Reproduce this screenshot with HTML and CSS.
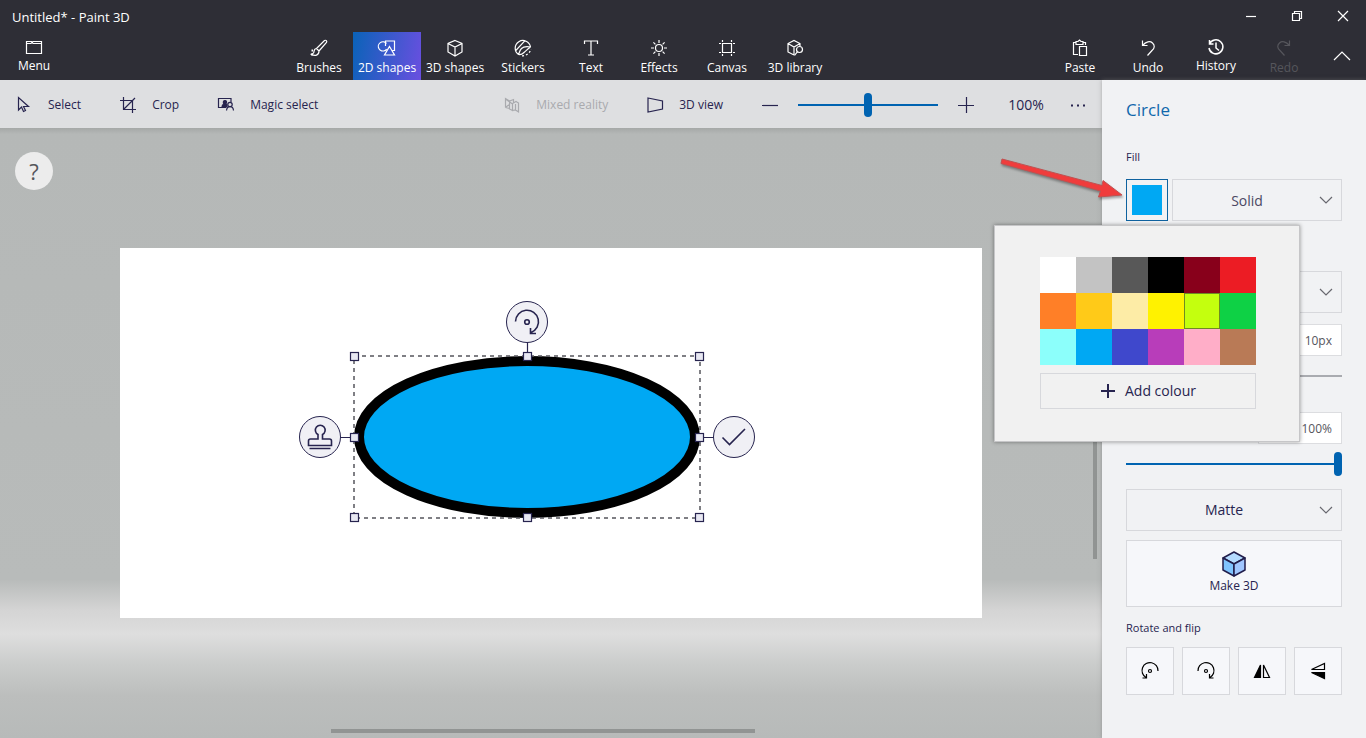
FILE: index.html
```html
<!DOCTYPE html>
<html lang="en-GB">
<head>
<meta charset="utf-8">
<meta name="viewport" content="width=device-width, initial-scale=1">
<title>Untitled* - Paint 3D</title>
<link rel="stylesheet" href="styles.css">
</head>
<body class="app">
<header class="header">
  <div class="titlebar">
    <h1 class="titlebar-name">Untitled* - Paint 3D</h1>
    <div class="window-controls">
      <button class="window-button" aria-label="Minimise"><svg class="icon-small" viewBox="0 0 12 12"><path d="M1 6.5h10"/></svg></button>
      <button class="window-button" aria-label="Restore"><svg class="icon-small" viewBox="0 0 12 12"><path d="M1.500 3.500h7v7h-7zM3.500 3.500v-2h7v7h-2"/></svg></button>
      <button class="window-button" aria-label="Close"><svg class="icon-small" viewBox="0 0 12 12"><path d="M1 1l10 10M11 1L1 11"/></svg></button>
    </div>
  </div>
  <div class="ribbon">
    <button class="tab tab-raised"><svg class="icon" viewBox="0 0 18 18"><path d="M1.500 3.500h5l1.500 2h8.500v10h-15zM1.500 5.500h4.500l2-2h8.500v3"/></svg>Menu</button>
    <nav class="tabs" aria-label="Tools">
      <button class="tab"><svg class="icon" viewBox="0 0 18 18"><path d="M6.500 9.500L14.500 1.500c1.500-.8 2.800.6 2 2L9 12M6.500 9.500L9 12M6.500 9.500C4 9.500 4 12 3.800 13.500c-.5 1-1.500 1.500-2.500 1.800C5 17.500 9 16.500 9 12"/><path d="M1.500 11.500h1.500M1 15.500h2" stroke-width="1.800"/></svg>Brushes</button>
      <button class="tab tab-active" aria-current="true"><svg class="icon" viewBox="0 0 18 18"><path d="M7 11.500A4.600 4.600 0 1 1 8.500 4.500M7.500 7V2h9v9.500h-2M11.500 7.500l5 8.500h-10zM5.500 12c1.500 0 2.700-1 3-2"/></svg>2D shapes</button>
      <button class="tab"><svg class="icon" viewBox="0 0 18 18"><path d="M9 1.500l7 3v8.500l-7 4-7-4V4.500zM2 4.500l7 3.500 7-3.500M9 8v9"/></svg>3D shapes</button>
      <button class="tab"><svg class="icon" viewBox="0 0 18 18"><path d="M4.500 15.500A7.700 7.700 0 1 1 16.500 8M4.500 15.500c1-2 1-4 3-6s6-2 9-1.500M4.500 15.500c2.500.5 4-.5 5.500-2s4-3.500 6.500-5.500M1.800 11.500L11 1.700"/><path d="M8 16.800c4.500 0 8-2.800 8.800-6.800" stroke-dasharray="2 2"/></svg>Stickers</button>
      <button class="tab"><svg class="icon" viewBox="0 0 18 18"><path d="M2.500 5V2h13v3M9 2v14M6 16h6"/></svg>Text</button>
      <button class="tab"><svg class="icon" viewBox="0 0 18 18"><circle cx="9" cy="9" r="3.500"/><path d="M9 1v3M9 14v3M1 9h3M14 9h3M3.400 3.400l2 2M12.600 12.600l2 2M3.400 14.600l2-2M12.600 5.400l2-2"/></svg>Effects</button>
      <button class="tab"><svg class="icon" viewBox="0 0 18 18"><path d="M4.500 4.500h9v9h-9zM4.500 1v2M13.500 1v2M4.500 15v2M13.500 15v2M1 4.500h2M15 4.500h2M1 13.500h2M15 13.500h2"/></svg>Canvas</button>
      <button class="tab"><svg class="icon" viewBox="0 0 18 18"><path d="M8 16l-6-3V4.500l6-3 6 3V7M2 4.500L8 8l6-3.500M8 8v8"/><circle cx="13.500" cy="10.500" r="3"/><path d="M11.500 12.700L8.500 16.500"/></svg>3D library</button>
    </nav>
    <div class="tabs-edit">
      <button class="tab"><svg class="icon" viewBox="0 0 18 18"><path d="M7 15.500H2.500V3.500H5M12 3.500h2.500V6M5 2.500h2L8.500 1 10 2.500h2v3H5zM8.500 7.500h7v9h-7z"/></svg>Paste</button>
      <button class="tab"><svg class="icon" viewBox="0 0 18 18"><path d="M3.500 1.500v5h5M3.500 6.500C7 2.500 11 1.700 13.500 4s2.300 5-.5 7.500L8.500 16.500"/></svg>Undo</button>
      <button class="tab tab-raised"><svg class="icon" viewBox="0 0 18 18"><path d="M2.500 2v4h4M2.500 6a7 7 0 1 1-.5 4M9 4.500V10l3 2.500" stroke-width="1.500"/></svg>History</button>
      <button class="tab" disabled><svg class="icon" viewBox="0 0 18 18"><path d="M14.500 1.500v5h-5M14.500 6.500C11 2.500 7 1.700 4.500 4s-2.300 5 .5 7.500l4.500 5"/></svg>Redo</button>
    </div>
    <button class="collapse" aria-label="Collapse ribbon"><svg class="icon" viewBox="0 0 18 18"><path d="M1 13l8-8 8 8"/></svg></button>
  </div>
</header>
<main class="body">
  <section class="editor">
    <div class="toolbar">
      <button class="tool"><svg class="icon-tool" viewBox="0 0 16 16"><path d="M2.500 .5v12.500l3-3 2 4.500 2-1-2-4h5z"/></svg>Select</button>
      <button class="tool"><svg class="icon-tool" viewBox="0 0 16 16"><path d="M3.500 0v12.500H16M0 3.500h12.500V16M3.500 12.500L15 1"/></svg>Crop</button>
      <button class="tool"><svg class="icon-tool" viewBox="0 0 16 16"><path d="M8 10.500H.5v-9h12.500V5"/><path d="M4 10c0-2 1-2.500 1.800-3C4.800 5 5.500 3.500 7 3.500S9 5 8 7c1 .5 1.200 1.500 1 3z" fill="currentColor"/><circle cx="12" cy="7.500" r="2.200"/><path d="M8.500 13.500c.3-2.500 1.500-3.800 3.500-3.800s3.300 1.300 3.500 3.800"/></svg>Magic select</button>
      <button class="tool tool-last-group" disabled><svg class="icon-tool" viewBox="0 0 16 16"><path d="M1.500 10.500v-9l4 2.500 4-1.500v4M1.500 10.500l4 1M5.500 4v8l3 1.500V6.500l3.500-2 2.500 1.500v9l-3-2-3 .5M11.500 7v6M1.500 2l7 5M2 10l4-3"/></svg>Mixed reality</button>
      <button class="tool"><svg class="icon-tool" viewBox="0 0 16 16"><path d="M1 1l14.500 3v8L1 15z"/></svg>3D view</button>
      <div class="zoom">
        <button class="zoom-button" aria-label="Zoom out"><svg class="icon-tool" viewBox="0 0 16 16"><path d="M0 8.500h16"/></svg></button>
        <input class="slider zoom-slider" type="range" min="0" max="100" value="50" aria-label="Zoom">
        <button class="zoom-button" aria-label="Zoom in"><svg class="icon-tool" viewBox="0 0 16 16"><path d="M0 8.500h16M8.500 0v16"/></svg></button>
        <output class="zoom-value">100%</output>
      </div>
      <button class="zoom-button" aria-label="More options"><svg class="icon-tool" viewBox="0 0 16 16"><path d="M1 8.500h2M7 8.500h2M13 8.500h2" stroke-width="2"/></svg></button>
    </div>
    <div class="workspace">
      <button class="help" aria-label="Help">?</button>
      <div class="canvas">
        <div class="selection">
          <svg class="selection-art" viewBox="0 0 346 162" role="img" aria-label="Circle shape">
            <ellipse cx="173" cy="81" rx="168" ry="76" fill="#00a8f3" stroke="#000" stroke-width="10"/>
            <rect class="selection-outline" width="346" height="162"/>
            <path class="selection-line" d="M173.500-14V0M-14 81.500H0M346 81.500h14"/>
            <g class="selection-handle">
              <rect x="-3.500" y="-3.500" width="8" height="8"/><rect x="169.500" y="-3.500" width="8" height="8"/><rect x="341.500" y="-3.500" width="8" height="8"/>
              <rect x="-3.500" y="77.500" width="8" height="8"/><rect x="341.500" y="77.500" width="8" height="8"/>
              <rect x="-3.500" y="157.500" width="8" height="8"/><rect x="169.500" y="157.500" width="8" height="8"/><rect x="341.500" y="157.500" width="8" height="8"/>
            </g>
          </svg>
          <button class="node node-rotate" aria-label="Rotate"><svg class="icon-node" viewBox="0 0 28 28"><path d="M2.500 13.500A11.500 11.500 0 1 1 18 24.500M17.500 20v5.500h5.500"/><circle cx="14" cy="14" r="2.300"/></svg></button>
          <button class="node node-stamp" aria-label="Stamp"><svg class="icon-node" viewBox="0 0 28 28"><path d="M12 16v-4.500a4.900 4.900 0 1 1 4.500 0V16h7q2 0 2 2v4.500h-23V18q0-2 2-2zM3.500 25.500h21"/></svg></button>
          <button class="node node-commit" aria-label="Commit"><svg class="icon-node" viewBox="0 0 28 28"><path d="M2.500 14.500l7 7L25 6"/></svg></button>
        </div>
      </div>
      <div class="scrollbar scrollbar-vertical"></div>
      <div class="scrollbar scrollbar-horizontal"></div>
    </div>
  </section>
  <aside class="panel">
    <h2 class="panel-title">Circle</h2>
    <h3 class="panel-label">Fill</h3>
    <div class="fill-row">
      <button class="swatch-button" aria-label="Fill colour"><span class="swatch swatch-blue"></span></button>
      <div class="dropdown">
        <select class="select select-muted" aria-label="Fill type"><option>Solid</option></select>
        <svg class="dropdown-arrow" viewBox="0 0 14 14"><path d="M1 4l6 6 6-6"/></svg>
      </div>
    </div>
    <div class="fill-row line-row">
      <button class="swatch-button" aria-label="Line colour"><span class="swatch"></span></button>
      <div class="dropdown">
        <select class="select" aria-label="Line type"><option>Solid</option></select>
        <svg class="dropdown-arrow" viewBox="0 0 14 14"><path d="M1 4l6 6 6-6"/></svg>
      </div>
    </div>
    <input class="number" type="text" value="10px" aria-label="Thickness">
    <input class="slider thickness-slider" type="range" min="0" max="100" value="10" aria-label="Thickness slider">
    <input class="number opacity" type="text" value="100%" aria-label="Opacity">
    <input class="slider opacity-slider" type="range" min="0" max="100" value="100" aria-label="Opacity slider">
    <div class="dropdown finish">
      <select class="select" aria-label="Finish"><option>Matte</option></select>
      <svg class="dropdown-arrow" viewBox="0 0 14 14"><path d="M1 4l6 6 6-6"/></svg>
    </div>
    <button class="make"><svg class="icon-cube" viewBox="0 0 26 28"><path fill="#b4dbff" d="M13 2l11 6-11 6L2 8z"/><path fill="#7fc4ff" d="M2 8l11 6v12L2 20z"/><path fill="#a0c6ff" d="M24 8l-11 6v12l11-6z"/></svg>Make 3D</button>
    <h3 class="panel-label rotate-label">Rotate and flip</h3>
    <div class="rotate-row">
      <button class="rotate-button" aria-label="Rotate left"><svg class="icon" viewBox="0 0 18 18"><path d="M17 9A8 8 0 1 0 5 15.500M1.500 16h4v-4"/><circle cx="9" cy="9" r="1.500"/></svg></button>
      <button class="rotate-button" aria-label="Rotate right"><svg class="icon" viewBox="0 0 18 18"><path d="M1 9a8 8 0 1 1 12 6.500M16.500 16h-4v-4"/><circle cx="9" cy="9" r="1.500"/></svg></button>
      <button class="rotate-button" aria-label="Flip horizontal"><svg class="icon" viewBox="0 0 18 18"><path d="M7.500 3v12.500h-6z" fill="currentColor"/><path d="M10.500 3v12.500h6z"/></svg></button>
      <button class="rotate-button" aria-label="Flip vertical"><svg class="icon" viewBox="0 0 18 18"><path d="M15.500 10.500v6l-13-6z" fill="currentColor"/><path d="M15.500 7.500v-6l-13 6z"/></svg></button>
    </div>
    <div class="popup" role="dialog" aria-label="Choose colour">
      <div class="palette">
        <button class="colour white" aria-label="White"></button><button class="colour light-grey" aria-label="Light grey"></button><button class="colour dark-grey" aria-label="Dark grey"></button><button class="colour black" aria-label="Black"></button><button class="colour dark-red" aria-label="Dark red"></button><button class="colour red" aria-label="Red"></button>
        <button class="colour orange" aria-label="Orange"></button><button class="colour gold" aria-label="Gold"></button><button class="colour cream" aria-label="Light yellow"></button><button class="colour yellow" aria-label="Yellow"></button><button class="colour lime" aria-label="Lime"></button><button class="colour green" aria-label="Green"></button>
        <button class="colour aqua" aria-label="Aqua"></button><button class="colour blue" aria-label="Turquoise"></button><button class="colour indigo" aria-label="Indigo"></button><button class="colour purple" aria-label="Purple"></button><button class="colour rose" aria-label="Rose"></button><button class="colour brown" aria-label="Brown"></button>
      </div>
      <button class="add-colour"><svg class="icon-tool" viewBox="0 0 16 16"><path d="M1 8h14M8 1v14" stroke-width="2"/></svg>Add colour</button>
    </div>
    <svg class="pointer" viewBox="0 0 126 50" aria-hidden="true"><path d="M1 4.500L2 0l100 26.500 1-5L122 36l-23.500 2 2-6z"/></svg>
  </aside>
</main>
</body>
</html>
```
FILE: styles.css
```css
* { box-sizing: border-box; }

.app {
  margin: 0;
  min-height: 100vh;
  display: flex;
  flex-direction: column;
  overflow: hidden;
  color: #27244f;
  font-family: "Open Sans", "Noto Sans", sans-serif;
  font-size: 12px;
  line-height: 16px;
}

button, input, select {
  margin: 0;
  padding: 0;
  border: 0;
  border-radius: 0;
  background: none;
  color: inherit;
  font: inherit;
}

svg {
  display: block;
  flex: none;
  fill: none;
  stroke: currentColor;
  stroke-width: 1.2;
  overflow: visible;
}

.icon { width: 18px; height: 18px; }
.icon-small { width: 12px; height: 12px; }
.icon-tool { width: 16px; height: 16px; }
.icon-node { width: 28px; height: 28px; stroke-width: 1.6; }
.icon-cube { width: 26px; height: 28px; color: #211d4b; stroke-width: 1.5; stroke-linejoin: round; }

/* Header */
.header { background: #2e2e36; color: #fff; }
.titlebar { display: flex; justify-content: space-between; height: 32px; }
.titlebar-name { margin: 0; padding: 8px 12px; font-size: 13px; font-weight: 400; line-height: 18px; }
.window-controls { display: flex; }
.window-button { display: grid; place-items: center; width: 46px; }
.ribbon { display: flex; height: 48px; }
.tabs { display: flex; flex: 1; justify-content: center; }
.tabs-edit { display: flex; }
.tab {
  display: flex;
  flex-direction: column;
  align-items: center;
  gap: 3px;
  width: 68px;
  padding-top: 7px;
  white-space: nowrap;
}
.tab-raised { padding-top: 6px; gap: 2px; }
.tab-active { background: linear-gradient(100deg, #0a63b8, #6a4fe0); }
.tab:disabled { color: #56565c; }
.collapse { display: grid; place-items: center; width: 48px; }

/* Layout */
.body { display: flex; flex: 1; }
.editor { display: flex; flex: 1; flex-direction: column; min-width: 0; }

/* Toolbar */
.toolbar { display: flex; gap: 7px; height: 48px; padding-top: 1px; background: #dedfe1; }
.tool { display: flex; align-items: center; gap: 16px; padding: 0 16px; white-space: nowrap; }
.tool:disabled { color: #a9aaae; }
.tool-last-group { margin-left: auto; }
.zoom { display: flex; align-items: center; gap: 4px; }
.zoom-button { display: grid; place-items: center; width: 48px; height: 48px; }
.zoom-value { width: 42px; margin-left: 11px; font-size: 14px; text-align: center; }

/* Sliders */
.slider { display: block; height: 24px; appearance: none; }
.slider::-webkit-slider-runnable-track { height: 2px; background: #0063b1; }
.slider::-webkit-slider-thumb {
  width: 8px;
  height: 24px;
  margin-top: -11px;
  border-radius: 4px;
  background: #0063b1;
  appearance: none;
}
.zoom-slider { width: 140px; }
.thickness-slider { width: 100%; margin-top: 8px; }
.thickness-slider::-webkit-slider-runnable-track { background: #a9abb0; }
.opacity-slider { width: 100%; margin-top: 8px; }

/* Workspace */
.workspace {
  position: relative;
  display: grid;
  flex: 1;
  place-items: center;
  background: linear-gradient(#a5a8a7, #b5b8b7 1%, #b8bbba 74%, #d4d4d4 79%, #dedede 83%, #cacccb 88%, #bcbebd 93%, #b7bab9);
}
.help {
  position: absolute;
  top: 24px;
  left: 15px;
  width: 38px;
  height: 38px;
  border-radius: 50%;
  background: #ececec;
  color: #55555a;
  font-size: 22px;
}
.canvas {
  position: relative;
  width: calc(100% - 240px);
  aspect-ratio: 862 / 370;
  background: #fff;
}
.selection { position: absolute; top: 108px; left: 234px; width: 346px; height: 162px; }
.selection-art { width: 100%; height: 100%; }
.selection-outline { stroke: #55555c; stroke-width: 1.5; stroke-dasharray: 4 4; }
.selection-line { stroke: #27244f; }
.selection-handle { fill: #e8e8f2; stroke: #27244f; }
.node {
  position: absolute;
  display: grid;
  place-items: center;
  width: 42px;
  height: 42px;
  border: 1px solid #27244f;
  border-radius: 50%;
  background: #f0f0f5;
}
.node-rotate { top: -55px; left: 152px; }
.node-stamp { top: 60px; left: -55px; }
.node-commit { top: 60px; left: 359px; }
.scrollbar { position: absolute; background: #919493; }
.scrollbar-vertical { top: 29%; right: 5px; width: 4px; height: 254px; }
.scrollbar-horizontal { bottom: 5px; left: 30%; width: 424px; height: 4px; }

/* Side panel */
.panel {
  position: relative;
  width: 264px;
  padding: 18px 24px;
  background: #f1f2f4;
  box-shadow: 0 0 4px #77777788;
}
.panel-title { margin: 0; color: #1068ac; font-size: 17px; font-weight: 400; line-height: 24px; }
.panel-label { margin: 0; font-size: 11px; font-weight: 400; line-height: 16px; }
.panel-title + .panel-label { margin-top: 27px; }
.fill-row { display: flex; gap: 4px; margin-top: 14px; }
.line-row { margin-top: 50px; }
.swatch-button { display: grid; place-items: center; width: 42px; height: 42px; border: 1px solid #0f629f; }
.swatch { width: 30px; height: 30px; background: #000; }
.swatch-blue { background: #00a8f3; }
.dropdown { position: relative; flex: 1; }
.select {
  width: 100%;
  height: 42px;
  padding-right: 20px;
  border: 1px solid #d7d8dc;
  font-size: 14px;
  text-align-last: center;
  appearance: none;
}
.select-muted { padding-top: 2px; color: #4a4863; }
.dropdown-arrow {
  position: absolute;
  top: 14px;
  right: 9px;
  width: 14px;
  height: 14px;
  color: #68686f;
  pointer-events: none;
}
.number {
  display: block;
  width: 84px;
  height: 32px;
  margin: 11px 0 0 auto;
  padding-right: 9px;
  border: 1px solid #dcdde0;
  background: #fff;
  color: #55555c;
  text-align: right;
}
.opacity { margin-top: 24px; }
.finish { margin-top: 13px; }
.make {
  display: flex;
  flex-direction: column;
  align-items: center;
  justify-content: center;
  width: 100%;
  height: 67px;
  margin-top: 9px;
  padding-bottom: 3px;
  border: 1px solid #d7d8dc;
  background: #f6f7fa;
}
.rotate-label { margin-top: 13px; }
.rotate-row { display: grid; grid-template-columns: repeat(4, 1fr); gap: 8px; margin-top: 11px; }
.rotate-button {
  display: grid;
  place-items: center;
  height: 48px;
  border: 1px solid #d7d8dc;
  background: #f6f7fa;
  color: #000;
}

/* Colour picker */
.popup {
  position: absolute;
  top: 145px;
  left: -108px;
  width: 306px;
  padding: 31px 43px 32px 45px;
  border: 1px solid #c6c6c8;
  background: #f1f1f1;
  box-shadow: 0 0 4px #00000066;
}
.palette { display: grid; grid-template-columns: repeat(6, 1fr); }
.colour { height: 36px; }
.white { background: #fff; }
.light-grey { background: #c3c3c3; }
.dark-grey { background: #585858; }
.black { background: #000; }
.dark-red { background: #88001b; }
.red { background: #ec1c24; }
.orange { background: #ff7f27; }
.gold { background: #ffca18; }
.cream { background: #fdeca6; }
.yellow { background: #fff200; }
.lime { border: 1px solid #6e8c22; background: #c4ff0e; }
.green { background: #0ed145; }
.aqua { background: #8cfffb; }
.blue { background: #00a8f3; }
.indigo { background: #3f48cc; }
.purple { background: #b83dba; }
.rose { background: #ffaec8; }
.brown { background: #b97a56; }
.add-colour {
  display: flex;
  align-items: center;
  justify-content: center;
  gap: 9px;
  width: 100%;
  height: 36px;
  margin-top: 8px;
  border: 1px solid #d7d8dc;
  font-size: 14px;
}
.pointer {
  position: absolute;
  top: 79px;
  left: -102px;
  width: 126px;
  height: 50px;
  fill: #f03c3c;
  stroke: #c05050;
  stroke-width: 1;
  filter: drop-shadow(1px 2px 1px #00000055);
  pointer-events: none;
}
```
